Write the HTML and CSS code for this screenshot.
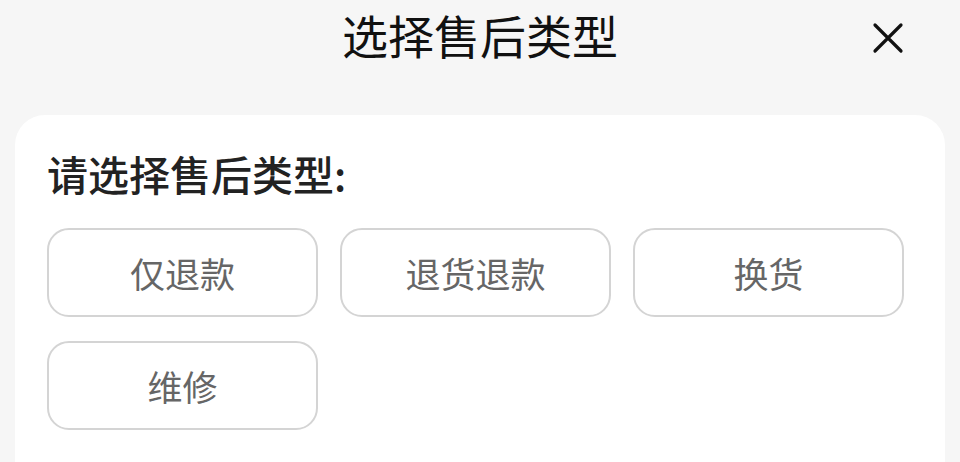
FILE: index.html
```html
<!DOCTYPE html>
<html lang="zh-CN">
<head>
    <meta charset="UTF-8">
    <title>选择售后类型</title>
    <link rel="stylesheet" href="styles.css">
</head>
<body>
    <div class="sheet">
        <div class="header">
            <h2 class="title">选择售后类型</h2>
            <a href="#" class="close" aria-label="关闭">
                <svg width="32" height="32" viewBox="0 0 32 32">
                    <path d="M3 3 L29 29 M29 3 L3 29" stroke="#111" stroke-width="3.2" stroke-linecap="round" fill="none"/>
                </svg>
            </a>
        </div>

        <div class="card">
            <div class="label">请选择售后类型:</div>
            <div class="options">
                <div class="option">仅退款</div>
                <div class="option">退货退款</div>
                <div class="option">换货</div>
                <div class="option">维修</div>
            </div>
        </div>
    </div>
</body>
</html>
```

FILE: styles.css
```css
body {
    margin: 0;
    background-color: #f6f6f6;
    font-family: "Noto Sans CJK SC", "Noto Sans", sans-serif;
    height: 462px;
    overflow: hidden;
}
.sheet {
    padding: 0 15px;
}
.header {
    position: relative;
    height: 115px;
}
.title {
    margin: 0;
    padding-top: 6px;
    text-align: center;
    font-size: 46px;
    font-weight: 400;
    line-height: 56px;
    color: #111;
}
.close {
    position: absolute;
    right: 41px;
    top: 22px;
    display: block;
    width: 32px;
    height: 32px;
}
.card {
    background-color: white;
    border-radius: 30px 30px 0 0;
    padding: 30px 32px 0;
    height: 317px;
}
.label {
    font-size: 41px;
    font-weight: 500;
    line-height: 56px;
    color: #222;
}
.options {
    display: grid;
    grid-template-columns: repeat(3, 271px);
    gap: 24px 22px;
    margin-top: 27px;
}
.option {
    height: 85px;
    border: 2px solid #d4d4d4;
    border-radius: 22px;
    display: flex;
    justify-content: center;
    align-items: center;
    font-size: 35px;
    color: #666;
}
```
